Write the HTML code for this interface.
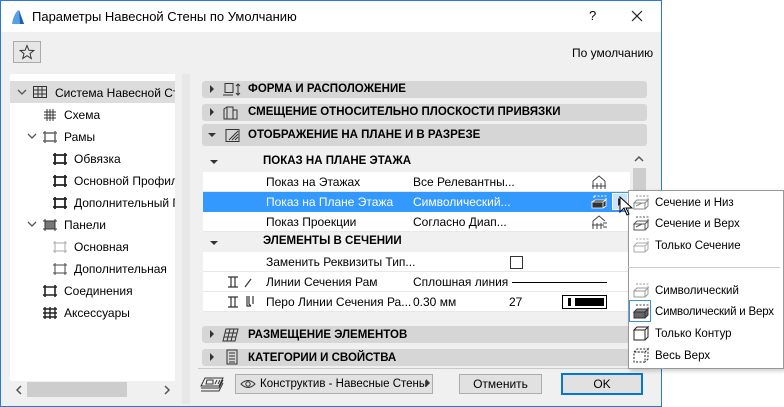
<!DOCTYPE html>
<html><head><meta charset="utf-8"><style>
*{margin:0;padding:0;box-sizing:border-box}
body{width:784px;height:407px;overflow:hidden;background:#fff;font-family:"Liberation Sans","DejaVu Sans",sans-serif;font-size:12px;color:#000;position:relative}
.a{position:absolute;white-space:nowrap}
.dlg{left:0;top:0;width:662px;height:407px;border:1px solid #2b79d6;background:#f0f0f0}
.hd{position:absolute;left:202px;width:445px;background:#d6d6d6;border-radius:3px;font-weight:bold;font-size:11.5px}
.tri{position:absolute;width:0;height:0}
.tr{border-left:4px solid #333;border-top:4px solid transparent;border-bottom:4px solid transparent}
.td{border-top:4px solid #333;border-left:4px solid transparent;border-right:4px solid transparent}
.row{position:absolute;left:203px;width:427px;height:20px;background:#fff;border-bottom:1px solid #e8e8e8}
.row span{position:absolute;top:3px}
.btn{position:absolute;height:20px;border:1px solid #adadad;background:#e1e1e1;text-align:center;line-height:18px}
.mi{position:absolute;left:655px;font-size:11.5px}
.tree{position:absolute;left:10px;top:74px;width:165px;height:307px;background:#fff;overflow:hidden}
.tree .a{font-size:12px}
</style></head><body>
<div class="a" style="left:0;top:360px;width:3px;height:40px;background:#e39a5a"></div>
<div class="a dlg"></div>
<div class="a" style="left:1px;top:1px;width:660px;height:31px;background:#fff"></div>
<svg class="a" style="left:10px;top:9px" width="16" height="16"><path d="M2 15 C3 8 6 2 9 1 L14 15 Z" fill="#5a9ee6"/><path d="M9 1 L14 15 L10 15 Z" fill="#1c5fb8"/></svg>
<div class="a" style="left:32px;top:9px;font-size:13px">Параметры Навесной Стены по Умолчанию</div>
<div class="a" style="left:589px;top:8px;font-size:13px">?</div>
<svg class="a" style="left:631px;top:10px" width="12" height="12"><path d="M1 1L11 11M11 1L1 11" stroke="#222" stroke-width="1.2"/></svg>
<div class="a" style="left:13px;top:41px;width:28px;height:22px;border:1px solid #aaa;background:#e6e6e6"></div>
<svg class="a" style="left:19px;top:44px" width="16" height="16"><path d="M8 1.5L9.9 6.3 14.8 6.5 11 9.6 12.3 14.5 8 11.7 3.7 14.5 5 9.6 1.2 6.5 6.1 6.3Z" fill="none" stroke="#333"/></svg>
<div class="a" style="left:572px;top:46px">По умолчанию</div>
<!-- left tree -->
<div class="tree">
<div class="a" style="left:0;top:7px;width:165px;height:22px;background:#dcdcdc"></div>
<svg class="a" style="left:7px;top:14px" width="10" height="8"><path d="M1 2l4 4 4-4" fill="none" stroke="#555" stroke-width="1.3"/></svg>
<svg class="a" style="left:22px;top:11px" width="16" height="14"><path d="M1.5 1.5h13v11h-13zM1.5 5h13M1.5 9h13M6 1.5v11M10 1.5v11" fill="none" stroke="#333"/></svg>
<div class="a" style="left:45px;top:12px">Система Навесной Стен</div>
<svg class="a" style="left:33px;top:34px" width="14" height="14"><path d="M1 4h12M1 7h12M1 10h12M4 1v12M7 1v12M10 1v12" stroke="#333"/></svg>
<div class="a" style="left:54px;top:34px">Схема</div>
<svg class="a" style="left:17px;top:58px" width="10" height="8"><path d="M1 2l4 4 4-4" fill="none" stroke="#555" stroke-width="1.3"/></svg>
<svg class="a" style="left:32px;top:56px" width="16" height="14"><path d="M3 1v12M13 1v12M1 3h14M1 11h14" stroke="#666" stroke-width="1.5"/></svg>
<div class="a" style="left:54px;top:56px">Рамы</div>
<div class="a" style="left:64px;top:78px">Обвязка</div>
<div class="a" style="left:64px;top:100px">Основной Профил</div>
<div class="a" style="left:64px;top:122px">Дополнительный Г</div>
<svg class="a" style="left:42px;top:78px" width="16" height="58"><g stroke="#222" stroke-width="1.8"><path d="M3 1v12M13 1v12M1 3h14M1 11h14"/><path d="M3 23v12M13 23v12M1 25h14M1 33h14"/><path d="M3 45v12M13 45v12M1 47h14M1 55h14"/></g></svg>
<svg class="a" style="left:17px;top:146px" width="10" height="8"><path d="M1 2l4 4 4-4" fill="none" stroke="#555" stroke-width="1.3"/></svg>
<svg class="a" style="left:32px;top:144px" width="16" height="14"><rect x="3" y="3" width="10" height="8" fill="#777"/><path d="M3 1v12M13 1v12M1 3h14M1 11h14" stroke="#333"/></svg>
<div class="a" style="left:54px;top:144px">Панели</div>
<svg class="a" style="left:42px;top:166px" width="16" height="14"><path d="M3 1v12M13 1v12M1 3h14M1 11h14" stroke="#aaa"/></svg>
<div class="a" style="left:64px;top:166px">Основная</div>
<svg class="a" style="left:42px;top:188px" width="16" height="14"><path d="M3 1v12M13 1v12M1 3h14M1 11h14" stroke="#444"/></svg>
<div class="a" style="left:64px;top:188px">Дополнительная</div>
<svg class="a" style="left:32px;top:210px" width="16" height="14"><path d="M3 1v12M13 1v12M1 3h14M1 11h14" stroke="#222" stroke-width="1.6"/></svg>
<div class="a" style="left:54px;top:210px">Соединения</div>
<svg class="a" style="left:32px;top:232px" width="16" height="14"><path d="M3 1v12M8 1v12M13 1v12M1 3h14M1 7h14M1 11h14" stroke="#222" stroke-width="1.4"/></svg>
<div class="a" style="left:54px;top:232px">Аксессуары</div>
</div>
<div class="a" style="left:10px;top:381px;width:165px;height:17px;background:#f0f0f0"></div>
<div class="a" style="left:27px;top:382px;width:100px;height:15px;background:#cdcdcd"></div>
<svg class="a" style="left:15px;top:385px" width="8" height="10"><path d="M6 1L2 5l4 4" fill="none" stroke="#555" stroke-width="1.5"/></svg>
<svg class="a" style="left:163px;top:385px" width="8" height="10"><path d="M2 1l4 4-4 4" fill="none" stroke="#555" stroke-width="1.5"/></svg>
<div class="a" style="left:182px;top:74px;width:8px;height:330px;background:#e8e8e8"></div>
<!-- headers -->
<div class="hd" style="top:81px;height:17px"></div>
<div class="hd" style="top:104px;height:17px"></div>
<div class="hd" style="top:124px;height:22px"></div>
<div class="tri tr a" style="left:210px;top:85px"></div>
<div class="tri tr a" style="left:210px;top:108px"></div>
<div class="tri td a" style="left:208px;top:133px"></div>
<svg class="a" style="left:222px;top:82px" width="22" height="16"><path d="M3 1.5h8v9H3zM1 13h10M16 2v11M14 4l2-2 2 2M14 11l2 2 2-2" fill="none" stroke="#333"/></svg>
<svg class="a" style="left:222px;top:105px" width="22" height="16"><path d="M2 4l3-2h6v12H2zM5 2v12M11 5h4v9h-4" fill="none" stroke="#333"/></svg>
<svg class="a" style="left:222px;top:128px" width="22" height="16"><path d="M4 1.5h13v12H4zM7 12l9-9M10 12l6-6M13 12l3-3" fill="none" stroke="#333"/></svg>
<div class="a" style="left:248px;top:83px;font-weight:bold;font-size:11.5px">ФОРМА И РАСПОЛОЖЕНИЕ</div>
<div class="a" style="left:248px;top:106px;font-weight:bold;font-size:11.5px">СМЕЩЕНИЕ ОТНОСИТЕЛЬНО ПЛОСКОСТИ ПРИВЯЗКИ</div>
<div class="a" style="left:248px;top:129px;font-weight:bold;font-size:11.5px">ОТОБРАЖЕНИЕ НА ПЛАНЕ И В РАЗРЕЗЕ</div>
<!-- table -->
<div class="a" style="left:203px;top:151px;width:427px;height:171px;background:#f0f0f0"></div>
<div class="tri td a" style="left:210px;top:160px"></div>
<div class="a" style="left:263px;top:155px;font-weight:bold;font-size:11.5px">ПОКАЗ НА ПЛАНЕ ЭТАЖА</div>
<div class="row" style="top:172px"><span style="left:63px">Показ на Этажах</span><span style="left:210px">Все Релевантны...</span></div>
<div class="row" style="top:192px;background:#3399ff;color:#fff;border:none"><span style="left:63px">Показ на Плане Этажа</span><span style="left:210px">Символический...</span></div>
<div class="row" style="top:212px"><span style="left:63px">Показ Проекции</span><span style="left:210px">Согласно Диап...</span></div>
<div class="tri td a" style="left:210px;top:241px"></div>
<div class="a" style="left:263px;top:235px;font-weight:bold;font-size:11.5px">ЭЛЕМЕНТЫ В СЕЧЕНИИ</div>
<div class="row" style="top:252px"><span style="left:63px">Заменить Реквизиты Тип...</span></div>
<div class="a" style="left:510px;top:256px;width:13px;height:13px;border:1px solid #333;background:#fff"></div>
<div class="row" style="top:272px"><span style="left:63px">Линии Сечения Рам</span><span style="left:210px">Сплошная линия</span></div>
<div class="a" style="left:512px;top:282px;width:95px;height:1px;background:#000"></div>
<div class="row" style="top:292px"><span style="left:63px">Перо Линии Сечения Ра...</span><span style="left:210px">0.30 мм</span><span style="left:306px">27</span></div>
<div class="a" style="left:562px;top:295px;width:45px;height:14px;border:1px solid #000;background:#fff"><div style="position:absolute;left:5px;top:2px;width:3px;height:8px;background:#000"></div><div style="position:absolute;left:12px;top:2px;width:29px;height:8px;background:#000"></div></div>
<svg class="a" style="left:227px;top:275px" width="34" height="36"><path d="M1 2h10M1 12h10M4 2v10M8 2v10M18 12l6-8" fill="none" stroke="#333" stroke-width="1.2"/><path d="M1 22h10M1 32h10M4 22v10M8 22v10M20 21v10h4M22 21v8l2 2M26 21v8" fill="none" stroke="#333" stroke-width="1.2"/></svg>
<svg class="a" style="left:591px;top:174px" width="16" height="16"><path d="M2 7L8 2 14 7M2 7v8M14 7v8M1 12h14M6 9v6M10 9v6" fill="none" stroke="#444"/></svg>
<svg class="a" style="left:590px;top:194px" width="18" height="16"><path d="M4 2h12v5M4 2v3" fill="none" stroke="#fff" stroke-dasharray="2 1.5"/><path d="M2 8l3-2h11l-3 2zM2 8h11v6H2zM13 8l3-2v6l-3 2" fill="#333" stroke="#fff" stroke-width=".8"/></svg>
<svg class="a" style="left:591px;top:214px" width="18" height="16"><path d="M2 7L8 2 14 7M2 7v8M1 11h12M6 9v6M10 9v6M12 9h4M12 13h4" fill="none" stroke="#444"/></svg>
<div class="a" style="left:612px;top:193px;width:16px;height:17px;border:1px solid #fff;background:#cce4ff"><div style="position:absolute;left:5px;top:4px;border-left:5px solid #333;border-top:4px solid transparent;border-bottom:4px solid transparent"></div></div>
<!-- scrollbar -->
<div class="a" style="left:631px;top:151px;width:16px;height:171px;background:#f0f0f0"></div>
<div class="a" style="left:633px;top:168px;width:13px;height:40px;background:#cdcdcd"></div>
<svg class="a" style="left:634px;top:155px" width="10" height="8"><path d="M1 6l4-4 4 4" fill="none" stroke="#555" stroke-width="1.5"/></svg>
<div class="hd" style="top:326px;height:17px"></div>
<div class="hd" style="top:349px;height:17px"></div>
<div class="tri tr a" style="left:210px;top:330px"></div>
<div class="tri tr a" style="left:210px;top:353px"></div>
<svg class="a" style="left:222px;top:327px" width="18" height="16"><path d="M4 2h12l-3 12H1zM3 6h12M2 10h12M8 2l-3 12M12 2l-3 12" fill="none" stroke="#333"/></svg>
<svg class="a" style="left:225px;top:349px" width="14" height="16"><path d="M2 1h10v14H2zM4 4h6M4 7h6M4 10h6M4 13h6" fill="none" stroke="#333"/></svg>
<div class="a" style="left:248px;top:329px;font-weight:bold;font-size:11.5px">РАЗМЕЩЕНИЕ ЭЛЕМЕНТОВ</div>
<div class="a" style="left:248px;top:352px;font-weight:bold;font-size:11.5px">КАТЕГОРИИ И СВОЙСТВА</div>
<div class="a" style="left:198px;top:368px;width:462px;height:1px;background:#c8c8c8"></div>
<svg class="a" style="left:199px;top:376px" width="26" height="17"><path d="M6 2h18l-4 8H2zM2 12h18l4-8M2 15h18l4-8M8 4h6v4H7zM16 8l2-4M19 8l2-4" fill="none" stroke="#333"/></svg>
<div class="btn" style="left:235px;top:374px;width:198px;text-align:left;padding-left:24px;font-size:11.5px;overflow:hidden">Конструктив - Навесные Стены</div>
<svg class="a" style="left:240px;top:379px" width="16" height="10"><path d="M1 5Q8 -2 15 5Q8 12 1 5Z" fill="none" stroke="#333"/><circle cx="8" cy="5" r="2.2" fill="none" stroke="#333"/></svg>
<div class="a" style="left:426px;top:379px;border-left:4px solid #333;border-top:4px solid transparent;border-bottom:4px solid transparent"></div>
<div class="btn" style="left:459px;top:374px;width:83px">Отменить</div>
<div class="btn" style="left:561px;top:373px;width:82px;height:22px;border:2px solid #0078d7">OK</div>
<!-- popup -->
<div class="a" style="left:628px;top:190px;width:156px;height:179px;background:#fff;border:1px solid #999;box-shadow:2px 2px 4px rgba(0,0,0,.2)"></div>
<div class="a" style="left:628px;top:267px;width:152px;height:1px;background:#ccc"></div>
<div class="a" style="left:629px;top:300px;width:22px;height:22px;border:1px solid #3a8ee6"></div>
<svg class="a" style="left:632px;top:194px" width="18" height="170">
<g fill="none" stroke="#888"><path d="M4 2h12v5" stroke-dasharray="2 1.5"/><path d="M2 9l3-3h11l-3 3zM2 9h11v6H2zM13 9l3-3v6l-3 3M4 12l6-3"/></g>
<g fill="none" stroke="#555" transform="translate(0,21)"><path d="M4 2h12v5" stroke-dasharray="2 1.5"/><path d="M2 9l3-3h11l-3 3zM2 9h11v6H2zM13 9l3-3v6l-3 3M4 12l6-3"/></g>
<g fill="none" stroke="#aaa" transform="translate(0,43)"><path d="M4 2h12v5" stroke-dasharray="2 1.5"/><path d="M2 9l3-3h11l-3 3zM2 9h11v6H2zM13 9l3-3v6l-3 3"/></g>
<g fill="none" stroke="#999" transform="translate(0,88)"><path d="M4 2h12v5" stroke-dasharray="2 1.5"/><path d="M2 9l3-3h11l-3 3zM2 9h11v6H2zM13 9l3-3v6l-3 3"/></g>
<g transform="translate(0,109)"><path d="M4 2h12v5" fill="none" stroke="#444" stroke-dasharray="2 1.5"/><path d="M2 9l3-3h11l-3 3z" fill="#888" stroke="#333"/><path d="M2 9h11v6H2zM13 9l3-3v6l-3 3" fill="#666" stroke="#333"/></g>
<g fill="none" stroke="#222" transform="translate(0,131)"><path d="M2 5l3-3h11l-3 3zM2 5h11v10H2zM13 5l3-3v10l-3 3"/></g>
<g fill="none" stroke="#222" stroke-dasharray="2 1.5" transform="translate(0,153)"><path d="M2 5l3-3h11l-3 3zM2 5h11v10H2zM13 5l3-3v10l-3 3"/></g>
</svg>
<div class="mi" style="top:197px">Сечение и Низ</div>
<div class="mi" style="top:218px">Сечение и Верх</div>
<div class="mi" style="top:240px">Только Сечение</div>
<div class="mi" style="top:285px">Символический</div>
<div class="mi" style="top:306px;letter-spacing:-0.2px">Символический и Верх</div>
<div class="mi" style="top:328px">Только Контур</div>
<div class="mi" style="top:350px">Весь Верх</div>
<svg class="a" style="left:618px;top:196px" width="16" height="22"><path d="M2 1v15l4-4 3 7 2-1-3-6h6Z" fill="#fff" stroke="#000"/></svg>
</body></html>
